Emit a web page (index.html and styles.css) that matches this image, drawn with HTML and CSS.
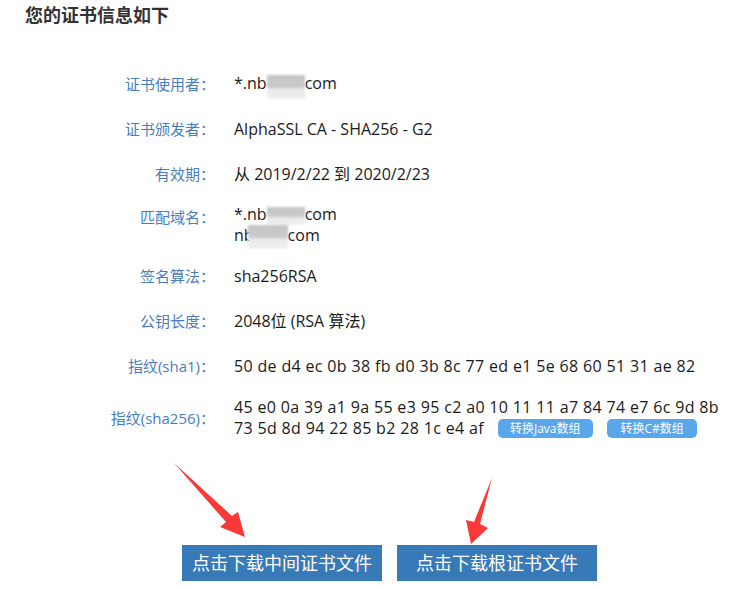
FILE: index.html
```html
<!DOCTYPE html>
<html lang="zh-CN">
<head>
<meta charset="utf-8">
<title>证书信息</title>
<link rel="stylesheet" href="styles.css">
</head>
<body>
<div class="page">
  <h2 class="title">您的证书信息如下</h2>
  <div class="info">
    <div class="row">
      <div class="label">证书使用者：</div>
      <div class="value">*.nb<span class="blur b1"></span>com</div>
    </div>
    <div class="row">
      <div class="label">证书颁发者：</div>
      <div class="value">AlphaSSL CA - SHA256 - G2</div>
    </div>
    <div class="row">
      <div class="label">有效期：</div>
      <div class="value">从 2019/2/22 到 2020/2/23</div>
    </div>
    <div class="row row-top">
      <div class="label">匹配域名：</div>
      <div class="value">*.nb<span class="blur b2"></span>com<br>nb<span class="blur b3"></span>com</div>
    </div>
    <div class="row">
      <div class="label">签名算法：</div>
      <div class="value">sha256RSA</div>
    </div>
    <div class="row">
      <div class="label">公钥长度：</div>
      <div class="value">2048位 (RSA 算法)</div>
    </div>
    <div class="row">
      <div class="label">指纹(sha1)：</div>
      <div class="value hex">50 de d4 ec 0b 38 fb d0 3b 8c 77 ed e1 5e 68 60 51 31 ae 82</div>
    </div>
    <div class="row row-multi">
      <div class="label">指纹(sha256)：</div>
      <div class="value hex">45 e0 0a 39 a1 9a 55 e3 95 c2 a0 10 11 11 a7 84 74 e7 6c 9d 8b<br>73 5d 8d 94 22 85 b2 28 1c e4 af<span class="tag">转换Java数组</span><span class="tag tag-c">转换C#数组</span></div>
    </div>
  </div>
  <div class="actions">
    <a class="btn">点击下载中间证书文件</a>
    <a class="btn">点击下载根证书文件</a>
  </div>
</div>
<svg class="arrows" width="754" height="589" viewBox="0 0 754 589">
  <polygon points="174,463 232,516 238,512 245,537 220,527 226,522" fill="#f93838"/>
  <polygon points="492,478 480,524 488,528 471,544 466,520 474,522" fill="#f93838"/>
</svg>
</body>
</html>
```
FILE: styles.css
```css
html, body {
  margin: 0;
  padding: 0;
  background: #fff;
}
body {
  font-family: "Open Sans", "Noto Sans CJK SC", sans-serif;
  color: #222;
  width: 754px;
  height: 589px;
  overflow: hidden;
  position: relative;
}
.page {
  padding: 4px 0 0 25px;
}
.title {
  margin: 0;
  font-size: 18px;
  line-height: 22px;
  font-weight: bold;
  color: #333;
}
.info {
  margin-top: 36px;
}
.row {
  display: flex;
  align-items: center;
  min-height: 45px;
  padding: 8px 0;
  box-sizing: border-box;
}
.row-top {
  align-items: flex-start;
  padding: 7px 0 5px;
}
.row-top .label {
  padding-top: 3px;
}
.row-multi {
  padding: 8px 0 6px;
}
.label {
  width: 190px;
  flex: none;
  text-align: right;
  color: #4a7dbd;
  font-size: 15px;
  line-height: 21px;
}
.value {
  margin-left: 19px;
  font-size: 16px;
  line-height: 21px;
  color: #1a1a1a;
}
.hex {
  letter-spacing: 0.34px;
}
.blur {
  display: inline-block;
  vertical-align: middle;
  height: 24px;
  background: linear-gradient(#c6c6c6 0%, #cacaca 55%, #e8e8e8 56%, #f0f0f0 100%);
  filter: blur(1px);
}
.b1 { width: 38px; margin-top: 4px; }
.b2 { width: 38px; height: 18px; }
.b3 { width: 40px; margin-left: -6px; }
.tag {
  display: inline-block;
  margin-left: 14px;
  padding: 0 12px;
  height: 19px;
  line-height: 19px;
  font-size: 12px;
  letter-spacing: 0;
  color: #fff;
  background: #5aa6ea;
  border-radius: 5px;
  vertical-align: 1px;
}
.tag-c {
  padding: 0 13px 0 14px;
}
.actions {
  display: flex;
  justify-content: center;
  gap: 15px;
  margin-top: 100px;
}
.btn {
  display: block;
  width: 200px;
  height: 36px;
  line-height: 36px;
  text-align: center;
  font-size: 18px;
  color: #fff;
  background: #377ab7;
  text-decoration: none;
}
.arrows {
  position: absolute;
  left: 0;
  top: 0;
  pointer-events: none;
}
```
